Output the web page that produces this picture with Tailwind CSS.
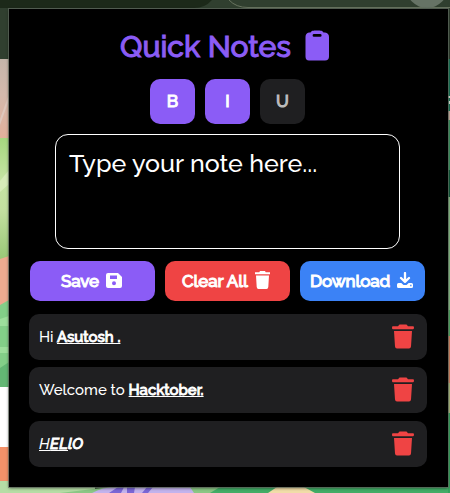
<!DOCTYPE html>
<html lang="en">
<head>
<meta charset="utf-8">
<title>Quick Notes</title>
<script src="https://cdn.jsdelivr.net/npm/@tailwindcss/browser@4"></script>
</head>
<body class="relative h-[493px] w-[450px] overflow-hidden bg-[#303f2f] font-['Raleway','Lato',sans-serif] text-white">
<!-- Page behind the popup -->
<svg class="absolute inset-0" width="450" height="493" viewBox="0 0 450 493">
  <defs>
    <linearGradient id="pink" x1="0" y1="0" x2="0" y2="1"><stop offset="0" stop-color="#c4b5aa"/><stop offset=".45" stop-color="#d4b9ac"/><stop offset="1" stop-color="#e3b09b"/></linearGradient>
    <linearGradient id="leaf" x1="0" y1="0" x2="0" y2="1"><stop offset="0" stop-color="#a6d67f"/><stop offset=".35" stop-color="#c6e4a4"/><stop offset=".6" stop-color="#c3dfa0"/><stop offset="1" stop-color="#99c877"/></linearGradient>
  </defs>
  <path d="M0 0H212Q205 8 194 8H0Z" fill="#1c2919"/>
  <path d="M229 0Q236 7.500 248 7.500H450" fill="none" stroke="#68745f"/>
  <circle cx="427" cy="-13" r="21" fill="#667365"/>
  <path d="M0 59H9V138H0Z" fill="url(#pink)"/>
  <path d="M0 119L9 94V100L0 125Z" fill="#dfc7bc"/>
  <path d="M0 138H9V259H0Z" fill="url(#leaf)"/>
  <path d="M0 181L9 170V184L0 192Z" fill="#d7ecb9"/>
  <path d="M0 259L9 256V305H0Z" fill="#edaa8f"/>
  <path d="M0 305L9 300V387H0Z" fill="#83cf88"/>
  <path d="M0 319L9 316V326H0ZM0 347H9V353H0Z" fill="#9ddf9c"/>
  <path d="M0 368L9 362V387H0Z" fill="#63b774"/>
  <path d="M0 387H9V447H0Z" fill="#fff"/>
  <path d="M0 447H9V481H0Z" fill="#f29169"/>
  <path d="M0 481H9V487H95V493H0Z" fill="#b5dda5"/>
  <path d="M60 493L110 487H450V493Z" fill="#8bc785"/>
  <path d="M92 493Q104 486 120 487H190L194 493Z" fill="#c2b3ed"/>
  <path d="M109 493L118 487H124L121 493ZM127 493V487H135L134 493ZM142 493L147 487H153L148 493Z" fill="#7a66d5"/>
  <path d="M210 493L220 487H450V493Z" fill="#43ad67"/>
  <path d="M268 493L277 487H304L315 493Z" fill="#f1dda8"/>
  <path d="M448 59H450V137H448Z" fill="#197557"/>
  <path d="M448 96H450V98H448ZM449 101H450V104H449Z" fill="#d8e2d7"/>
  <path d="M448 111H450V120H448Z" fill="#c9aea0"/>
  <path d="M448 120H450V197H448Z" fill="#3c9460"/>
  <path d="M448 170H450V197H448Z" fill="#125c3c"/>
  <path d="M448 197H450V310H448Z" fill="#88bd86"/>
  <path d="M448 310H450V336H448Z" fill="#50a962"/>
  <path d="M448 336H450V383H448Z" fill="#d58564"/>
  <path d="M448 383H450V413H448Z" fill="#adb97e"/>
  <path d="M448 413H450V493H448Z" fill="#36a35e"/>
</svg>
<main class="relative ml-[9px] mt-[9px] flex h-[478px] w-[439px] flex-col bg-black shadow-[0_0_0_1px_#626c61b0,0_1px_3px_#0009]">
  <h1 class="ml-[111px] mt-[21px] flex h-[34px] items-center text-[30px] leading-[34px] font-medium text-[#8b5cf6]">
    <span class="w-[185px] whitespace-nowrap [-webkit-text-stroke:1px_currentColor]">Quick Notes</span>
    <svg class="relative -top-[2px] h-[31px] w-[24px]" viewBox="0 0 24 31" fill="currentColor"><path fill-rule="evenodd" d="M4 2.500H5.500C6.500 .8 8 .5 12 .5S17.500 .8 18.500 2.500H20Q24 3 24 7V26.500Q24 30.500 20 30.500H4Q.5 30.500 .5 26.500V7Q.5 3 4 2.500ZM9 4A1.400 1.400 0 0 0 9 6.800H15.200A1.400 1.400 0 0 0 15.200 4Z"/></svg>
  </h1>
  <div class="ml-[141px] mt-[15px] flex gap-[10px] text-[17px] font-medium [-webkit-text-stroke:1px_currentColor]">
    <button class="size-[45px] rounded-[10px] bg-[#8b5cf6] pt-px">B</button>
    <button class="size-[45px] rounded-[10px] bg-[#8b5cf6] pt-px">I</button>
    <button class="size-[45px] rounded-[10px] bg-[#1f1f21] pt-px text-[#bdbdbd]">U</button>
  </div>
  <div class="ml-[46px] mt-[10px] h-[115px] w-[345px] rounded-[13px] border border-white px-[13px] pt-[12px] text-[25px] leading-[32px] font-medium">Type your note here...</div>
  <div class="ml-[21px] mt-[12px] flex gap-[10px] text-[17px] font-medium">
    <button class="flex h-[40px] w-[125px] items-center rounded-[10px] bg-[#8b5cf6] pl-[31px]">
      <span class="w-[45px] pt-px text-left tracking-[-0.1px] [-webkit-text-stroke:1px_currentColor]">Save</span>
      <svg class="relative -top-px h-[15px] w-[16px]" viewBox="0 0 16 15" fill="currentColor"><path fill-rule="evenodd" d="M2 0H12L16 4V13Q16 15 14 15H2Q0 15 0 13V2Q0 0 2 0ZM4 2.500V6H11V2.500ZM8 8.300A2 2 0 1 0 8 12.300A2 2 0 0 0 8 8.300Z"/></svg>
    </button>
    <button class="flex h-[40px] w-[125px] items-center rounded-[10px] bg-[#ef4444] pl-[17px]">
      <span class="w-[73px] whitespace-nowrap pt-px text-left tracking-[-0.1px] [-webkit-text-stroke:1px_currentColor]">Clear All</span>
      <svg class="relative -top-px h-[18px] w-[15px]" viewBox="0 0 15 18" fill="currentColor"><path d="M0 1.200H4.300L5 0H10L10.700 1.200H15V3.200H0ZM1 4.500H14L13.300 16Q13.100 18 11.500 18H3.500Q1.900 18 1.700 16Z"/></svg>
    </button>
    <button class="flex h-[40px] w-[125px] items-center rounded-[10px] bg-[#3b82f6] pl-[10px]">
      <span class="w-[87px] whitespace-nowrap pt-px text-left tracking-[-0.15px] [-webkit-text-stroke:1px_currentColor]">Download</span>
      <svg class="relative -top-px h-[16px] w-[16px]" viewBox="0 0 16 16" fill="none"><path d="M8 1V9.500M4 6L8 9.800L12 6" stroke="currentColor" stroke-width="2.300" stroke-linecap="round" stroke-linejoin="round"/><path fill="currentColor" fill-rule="evenodd" d="M1.500 11H4.300L6.500 13H9.500L11.700 11H14.500Q16 11 16 12.500V14.500Q16 16 14.500 16H1.500Q0 16 0 14.500V12.500Q0 11 1.500 11ZM13.200 12.800V14.200H14.500V12.800Z"/></svg>
    </button>
  </div>
  <ul class="ml-[20px] mt-[13px] w-[398px] text-[15px] font-medium">
    <li class="flex h-[46px] items-center justify-between rounded-[10px] bg-[#1f1f21] pl-[10px] pr-[13px]">
      <span>Hi <b class="font-medium underline [-webkit-text-stroke:0.9px_currentColor]">Asutosh .</b></span>
      <svg class="relative -top-px h-[25px] w-[22px] text-[#ef4444]" viewBox="0 0 22 25" fill="currentColor"><path d="M1 2.300H6L7.500.5H14.500L16 2.300H21Q22 2.300 22 3.700T21 5.200H1Q0 5.200 0 3.700T1 2.300ZM2 7H20L19 22.500Q18.800 24.500 17 24.500H5Q3.200 24.500 3 22.500Z"/></svg>
    </li>
    <li class="mt-[7px] flex h-[46px] items-center justify-between rounded-[10px] bg-[#1f1f21] pl-[10px] pr-[13px]">
      <span>Welcome to <b class="font-medium underline [-webkit-text-stroke:0.9px_currentColor]">Hacktober.</b></span>
      <svg class="relative -top-px h-[25px] w-[22px] text-[#ef4444]" viewBox="0 0 22 25" fill="currentColor"><path d="M1 2.300H6L7.500.5H14.500L16 2.300H21Q22 2.300 22 3.700T21 5.200H1Q0 5.200 0 3.700T1 2.300ZM2 7H20L19 22.500Q18.800 24.500 17 24.500H5Q3.200 24.500 3 22.500Z"/></svg>
    </li>
    <li class="mt-[8px] flex h-[46px] items-center justify-between rounded-[10px] bg-[#1f1f21] pl-[10px] pr-[13px]">
      <i class="tracking-[0.4px]"><u>H<b class="font-medium [-webkit-text-stroke:0.9px_currentColor]">EL</b></u><b class="font-medium [-webkit-text-stroke:0.9px_currentColor]">lO</b></i>
      <svg class="relative -top-px h-[25px] w-[22px] text-[#ef4444]" viewBox="0 0 22 25" fill="currentColor"><path d="M1 2.300H6L7.500.5H14.500L16 2.300H21Q22 2.300 22 3.700T21 5.200H1Q0 5.200 0 3.700T1 2.300ZM2 7H20L19 22.500Q18.800 24.500 17 24.500H5Q3.200 24.500 3 22.500Z"/></svg>
    </li>
  </ul>
</main>
</body>
</html>
